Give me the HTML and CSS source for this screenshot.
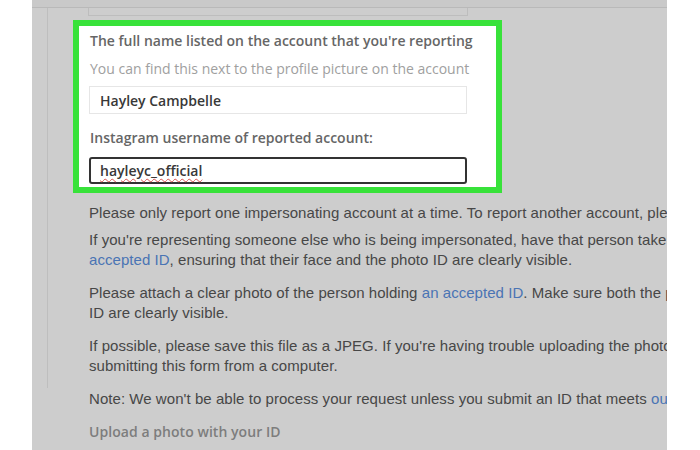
FILE: index.html
```html
<!DOCTYPE html>
<html>
<head>
<meta charset="utf-8">
<link rel="stylesheet" href="styles.css">
</head>
<body>
<div class="panel">
  <div class="topbar"></div>
  <div class="frame">
    <div class="stub"></div>
    <div class="highlight">
      <div class="label">The full name listed on the account that you're reporting</div>
      <div class="hint">You can find this next to the profile picture on the account</div>
      <div class="input input-light">Hayley Campbelle</div>
      <div class="label label-2">Instagram username of reported account:</div>
      <div class="input input-focus"><span class="typo">hayleyc_official</span></div>
    </div>
    <div class="copy">
      <p class="first">Please only report one impersonating account at a time. To report another account, please submit another form.</p>
      <p>If you're representing someone else who is being impersonated, have that person take a photo of themselves holding an<br><a>accepted ID</a>, ensuring that their face and the photo ID are clearly visible.</p>
      <p>Please attach a clear photo of the person holding <a>an accepted ID</a>. Make sure both the person's face and the photo<br>ID are clearly visible.</p>
      <p>If possible, please save this file as a JPEG. If you're having trouble uploading the photo from your phone, try<br>submitting this form from a computer.</p>
      <p>Note: We won't be able to process your request unless you submit an ID that meets <a>our requirements</a>.</p>
      <div class="upload">Upload a photo with your ID</div>
    </div>
  </div>
</div>
</body>
</html>
```

FILE: styles.css
```css
html, body {
  margin: 0;
  padding: 0;
  background: #ffffff;
}
body {
  width: 700px;
  height: 450px;
  overflow: hidden;
}
.panel {
  margin-left: 32px;
  width: 635px;
  height: 450px;
  background: #cdcdcd;
  overflow: hidden;
}
.topbar {
  height: 7px;
  background: #c9c9c9;
  border-bottom: 1px solid #b9b9b9;
}
.frame {
  margin-left: 15px;
  height: 380px;
  border-left: 1px solid #bebebe;
  box-shadow: 1px 0 0 #d6d6d6;
  padding-left: 25px;
}
.stub {
  margin-left: 15px;
  width: 378px;
  height: 7px;
  border-left: 1px solid #bdbdbd;
  border-right: 1px solid #bdbdbd;
  border-bottom: 1px solid #bdbdbd;
}
.highlight {
  margin-top: 4px;
  width: 407px;
  border: 6px solid #38e23a;
  background: #ffffff;
  padding: 6px 0 3px 10px;
  box-sizing: content-box;
  font-family: "Open Sans", "Lato", sans-serif;
}
.label {
  margin-left: 1px;
  font-size: 14px;
  font-weight: 600;
  line-height: 18px;
  color: #666666;
  white-space: nowrap;
}
.label-2 {
  margin-top: 15px;
}
.hint {
  margin-top: 10px;
  margin-left: 1px;
  font-size: 14px;
  line-height: 18px;
  color: #a0a0a0;
  white-space: nowrap;
}
.input {
  box-sizing: border-box;
  width: 378px;
  font-size: 14px;
  font-weight: 600;
  color: #383838;
  padding-left: 10px;
  display: flex;
  align-items: center;
}
.input-light {
  margin-top: 8px;
  height: 28px;
  border: 1px solid #e6e6e6;
}
.input-focus {
  margin-top: 10px;
  height: 27px;
  border: 2px solid #333333;
  border-radius: 3px;
  padding-left: 9px;
}
.typo {
  text-decoration: underline wavy #d9534f;
  text-decoration-thickness: 1px;
  text-underline-offset: 2px;
}
.copy {
  margin-left: 16px;
  margin-top: 10px;
  font-family: "Liberation Sans", Arial, sans-serif;
  font-size: 15px;
  letter-spacing: 0.05px;
  line-height: 20px;
  color: #474747;
  white-space: nowrap;
}
.copy p {
  margin: 13px 0 0 0;
}
.copy p.first {
  margin-top: 0;
  margin-bottom: -6px;
}
.copy a {
  color: #4a74b4;
}
.upload {
  margin-top: 13px;
  font-family: "Open Sans", "Lato", sans-serif;
  font-size: 14px;
  font-weight: 600;
  line-height: 20px;
  color: #7d7d7d;
}
```
